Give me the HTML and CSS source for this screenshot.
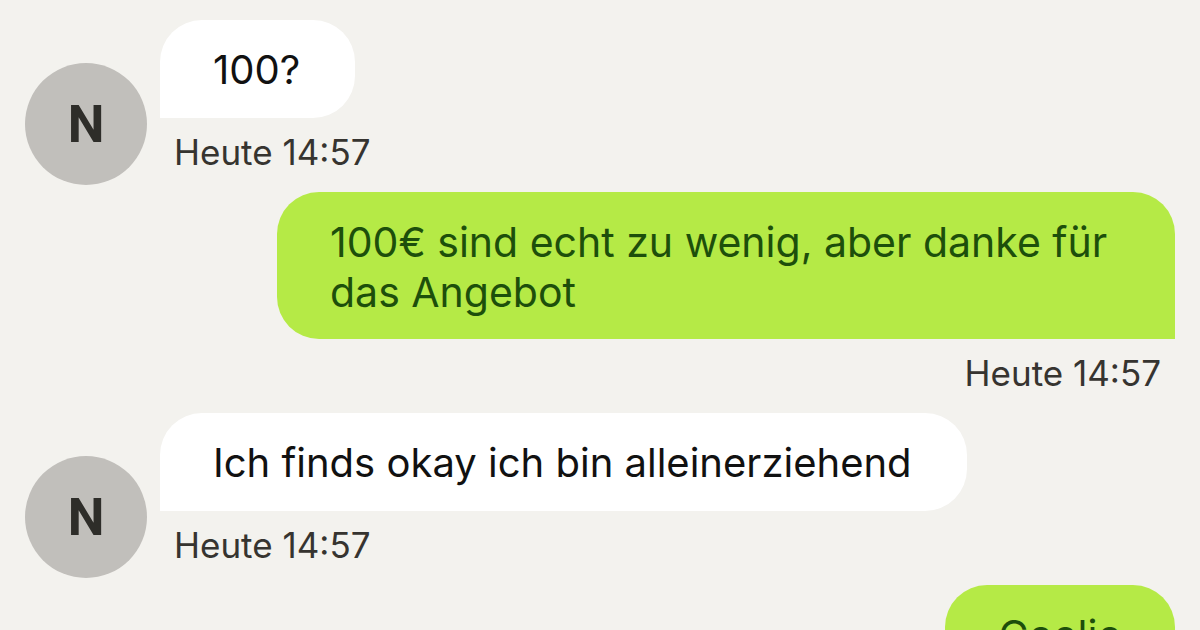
FILE: index.html
```html
<!DOCTYPE html>
<html lang="de">
<head>
<meta charset="utf-8">
<title>Chat</title>
<link rel="stylesheet" href="styles.css">
</head>
<body>
<main class="chat">
  <div class="row in">
    <div class="avatar">N</div>
    <div class="msg">
      <div class="bubble">100?</div>
      <div class="time">Heute 14:57</div>
    </div>
  </div>
  <div class="row out">
    <div class="msg">
      <div class="bubble">100€ sind echt zu wenig, aber danke für das Angebot</div>
      <div class="time">Heute 14:57</div>
    </div>
  </div>
  <div class="row in">
    <div class="avatar">N</div>
    <div class="msg">
      <div class="bubble">Ich finds okay ich bin alleinerziehend</div>
      <div class="time">Heute 14:57</div>
    </div>
  </div>
  <div class="row out">
    <div class="msg">
      <div class="bubble">Coolio</div>
    </div>
  </div>
</main>
</body>
</html>
```

FILE: styles.css
```css
html, body {
  margin: 0;
  padding: 0;
}

body {
  width: 1200px;
  height: 630px;
  overflow: hidden;
  background: #f3f2ee;
  font-family: Inter, Roboto, "Noto Sans", sans-serif;
  color: #111111;
}

.chat {
  display: flex;
  flex-direction: column;
  gap: 7px;
  padding: 20px 25px 0 25px;
}

.row {
  display: flex;
  align-items: flex-end;
}

.row.in {
  justify-content: flex-start;
  gap: 13px;
}

.row.out {
  justify-content: flex-end;
}

.avatar {
  flex: 0 0 auto;
  width: 122px;
  height: 122px;
  border-radius: 50%;
  background: #c1bfbb;
  color: #2e2d29;
  display: flex;
  align-items: center;
  justify-content: center;
  font-family: Roboto, "Noto Sans", sans-serif;
  font-weight: 700;
  font-size: 52px;
}

.msg {
  display: flex;
  flex-direction: column;
  min-width: 0;
}

.row.out .msg {
  align-items: flex-end;
}

.row.in .msg {
  align-items: flex-start;
}

.bubble {
  font-size: 40px;
  line-height: 50px;
  padding: 25px 55px 23px 53px;
}

.row.in .bubble {
  background: #ffffff;
  color: #111111;
  border-radius: 42px 42px 42px 0;
}

.row.out .bubble {
  background: #b5ea46;
  color: #1d4f0b;
  font-size: 41px;
  border-radius: 42px 42px 0 42px;
  max-width: 898px;
  box-sizing: border-box;
  padding: 25px 53px 22px 53px;
}

.time {
  font-size: 35px;
  line-height: 40px;
  color: #363430;
  margin: 14px 14px 13px 14px;
}
```
